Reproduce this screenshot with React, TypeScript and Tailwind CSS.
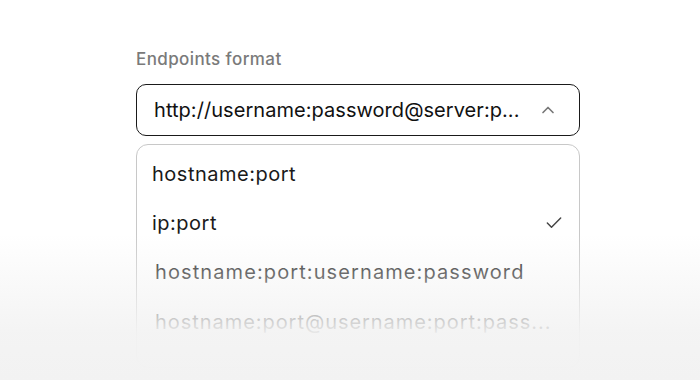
import { Check, ChevronUp } from "lucide-react";

const options = [
  { label: "hostname:port", selected: false, faded: false, tracking: "tracking-[0.5px]" },
  { label: "ip:port", selected: true, faded: false, tracking: "tracking-[0.5px]" },
  { label: "hostname:port:username:password", selected: false, faded: true, tracking: "tracking-[1.1px]" },
  { label: "hostname:port@username:port:pass...", selected: false, faded: true, tracking: "tracking-[0.95px]" },
];

export default function App() {
  return (
    <div
      className="relative h-[380px] w-[700px] overflow-hidden bg-white"
      style={{ fontFamily: "Inter, 'Noto Sans', sans-serif" }}
    >
      <div className="ml-[136px] flex w-[444px] flex-col pt-[48px]">
        <label className="text-[17px] leading-[22px] font-medium tracking-[0.4px] text-[#7a7a7a]">Endpoints format</label>

        {/* Trigger */}
        <button className="mt-[14px] flex h-[52px] items-center justify-between rounded-[10px] border-[1.5px] border-[#1a1a1a] pl-[17px] pr-[21px] text-left">
          <span className="whitespace-nowrap text-[20px] tracking-[0.05px] text-[#111]">
            http://username:password@server:p...
          </span>
          <ChevronUp className="h-[20px] w-[20px] text-[#777]" strokeWidth={2} />
        </button>

        {/* Options list */}
        <div className="mt-[8px] flex flex-col rounded-[12px] border border-[#c8c8c8] pt-[4px] pb-[20px]">
          {options.map((o) => (
            <div
              key={o.label}
              className={`flex h-[49.4px] items-center justify-between pr-[15px] ${o.faded ? "pl-[18px]" : "pl-[15px]"}`}
            >
              <span className={`whitespace-nowrap text-[20px] text-[#1a1a1a] ${o.tracking}`}>{o.label}</span>
              {o.selected && <Check className="h-[20px] w-[20px] text-[#444]" strokeWidth={1.75} />}
            </div>
          ))}
        </div>
      </div>

      {/* bottom fade */}
      <div className="pointer-events-none absolute inset-x-0 top-[234px] bottom-0 bg-gradient-to-b from-[#f3f3f3]/0 via-[#f3f3f3]/95 via-68% to-[#f2f2f2]" />
    </div>
  );
}
